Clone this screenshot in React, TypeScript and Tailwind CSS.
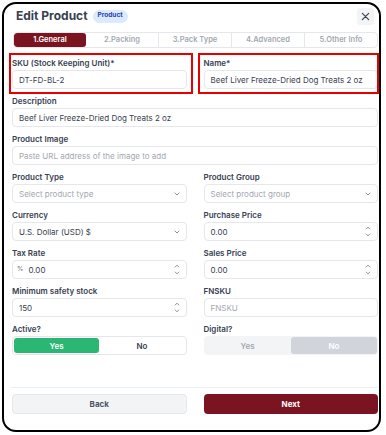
import React from "react";

const Label = ({ children }: { children: React.ReactNode }) => (
  <div className="h-[11px] leading-[11px] text-[8px] font-semibold text-[#374151] mb-[1px] whitespace-nowrap">
    {children}
  </div>
);

const Box = ({ children, muted = false }: { children?: React.ReactNode; muted?: boolean }) => (
  <div
    className={`h-[19px] border border-[#e5e7eb] rounded-[4px] bg-white flex items-center px-[6px] text-[8px] whitespace-nowrap ${
      muted ? "text-[#a3a8b0]" : "text-[#374151]"
    }`}
  >
    {children}
  </div>
);

const ChevronDown = () => (
  <svg width="6" height="4" viewBox="0 0 6 4" className="ml-auto">
    <path d="M1 1l2 2 2-2" fill="none" stroke="#6b7280" strokeWidth="0.8" strokeLinecap="round" strokeLinejoin="round" />
  </svg>
);

const Spinner = () => (
  <div className="ml-auto flex flex-col items-center gap-[3px]">
    <svg width="6" height="4" viewBox="0 0 6 4">
      <path d="M1.2 3l1.8-1.8 1.8 1.8" fill="none" stroke="#6b7280" strokeWidth="0.8" strokeLinecap="round" strokeLinejoin="round" />
    </svg>
    <svg width="6" height="4" viewBox="0 0 6 4">
      <path d="M1.2 1l1.8 1.8 1.8-1.8" fill="none" stroke="#6b7280" strokeWidth="0.8" strokeLinecap="round" strokeLinejoin="round" />
    </svg>
  </div>
);

const Field = ({ label, children, full = false }: { label: string; children: React.ReactNode; full?: boolean }) => (
  <div className={full ? "col-span-2" : ""}>
    <Label>{label}</Label>
    {children}
  </div>
);

export default function App() {
  const tabs = ["1.General", "2.Packing", "3.Pack Type", "4.Advanced", "5.Other Info"];
  return (
    <div className="w-[386px] h-[435px] bg-white p-[2px] font-['Inter',sans-serif]">
      <div className="relative w-[379px] h-[430px] border-2 border-black rounded-[14px] flex flex-col pl-[8px] pr-[1px]">
        {/* header */}
        <div className="h-[24px] flex items-center pl-[4px] pr-[4px]">
          <span className="text-[12px] font-bold text-[#374151] leading-none">Edit Product</span>
          <span className="ml-[5px] h-[13px] px-[5px] rounded-full bg-[#dbeafe] text-[#1e40af] text-[6.5px] font-bold flex items-center">
            Product
          </span>
          <div className="ml-auto w-[17px] h-[17px] rounded-[3px] bg-[#f3f4f6] flex items-center justify-center">
            <svg width="9" height="9" viewBox="0 0 10 10">
              <path d="M1.5 1.5l7 7M8.5 1.5l-7 7" stroke="#374151" strokeWidth="1.3" strokeLinecap="round" />
            </svg>
          </div>
        </div>

        {/* tabs */}
        <div className="mt-[4px] ml-[1px] h-[16px] flex border border-[#e5e7eb] rounded-[4px] overflow-hidden">
          {tabs.map((t, i) => (
            <div
              key={t}
              className={`flex-1 flex items-center justify-center text-[7.5px] font-semibold ${
                i === 0
                  ? "bg-[#7a1420] text-white rounded-[3px]"
                  : i === 1
                  ? "text-[#a3a8b0]"
                  : "text-[#a3a8b0] border-l border-[#e5e7eb]"
              }`}
            >
              {t}
            </div>
          ))}
        </div>

        {/* form */}
        <div className="mt-[10px] grid grid-cols-2 gap-x-[17px] gap-y-[7px]">
          <Field label="SKU (Stock Keeping Unit)*">
            <Box>DT-FD-BL-2</Box>
          </Field>
          <Field label="Name*">
            <Box>Beef Liver Freeze-Dried Dog Treats 2 oz</Box>
          </Field>
          <Field label="Description" full>
            <Box>Beef Liver Freeze-Dried Dog Treats 2 oz</Box>
          </Field>
          <Field label="Product Image" full>
            <Box muted>Paste URL address of the image to add</Box>
          </Field>
          <Field label="Product Type">
            <Box muted>
              Select product type
              <ChevronDown />
            </Box>
          </Field>
          <Field label="Product Group">
            <Box muted>
              Select product group
              <ChevronDown />
            </Box>
          </Field>
          <Field label="Currency">
            <Box>
              U.S. Dollar (USD) $
              <ChevronDown />
            </Box>
          </Field>
          <Field label="Purchase Price">
            <Box>
              0.00
              <Spinner />
            </Box>
          </Field>
          <Field label="Tax Rate">
            <Box>
              <span className="text-[6.5px] text-[#6b7280] mr-[5px] -ml-[2px]">%</span>
              0.00
              <Spinner />
            </Box>
          </Field>
          <Field label="Sales Price">
            <Box>
              0.00
              <Spinner />
            </Box>
          </Field>
          <Field label="Minimum safety stock">
            <Box>
              150
              <Spinner />
            </Box>
          </Field>
          <Field label="FNSKU">
            <Box muted>FNSKU</Box>
          </Field>
          <Field label="Active?">
            <div className="h-[19px] border border-[#e5e7eb] rounded-[4px] p-[1px] flex text-[8px] font-semibold">
              <div className="flex-1 bg-[#2bb673] rounded-[3px] text-white flex items-center justify-center">Yes</div>
              <div className="flex-1 text-[#374151] flex items-center justify-center">No</div>
            </div>
          </Field>
          <Field label="Digital?">
            <div className="h-[19px] bg-[#f3f4f6] rounded-[4px] p-[1px] flex text-[8px] font-semibold">
              <div className="flex-1 text-[#a3a8b0] flex items-center justify-center">Yes</div>
              <div className="flex-1 bg-[#d1d5db] rounded-[3px] text-white flex items-center justify-center">No</div>
            </div>
          </Field>
        </div>

        <div className="flex-1" />

        {/* footer */}
        <div className="ml-[-2px] border-t border-[#eef0f3]" />
        <div className="mt-[6px] mb-[16px] grid grid-cols-2 gap-x-[17px]">
          <div className="h-[20px] bg-[#f3f4f6] border border-[#e5e7eb] rounded-[4px] flex items-center justify-center text-[8px] font-bold text-[#4b5563]">
            Back
          </div>
          <div className="h-[20px] bg-[#7a1420] rounded-[4px] flex items-center justify-center text-[8px] font-bold text-white">
            Next
          </div>
        </div>

        {/* annotation highlights */}
        <div className="absolute left-[5px] top-[49px] w-[184px] h-[41px] border-[2.5px] border-[#e60000] pointer-events-none" />
        <div className="absolute left-[194px] top-[49px] w-[181px] h-[41px] border-[2.5px] border-[#e60000] pointer-events-none" />
      </div>
    </div>
  );
}
